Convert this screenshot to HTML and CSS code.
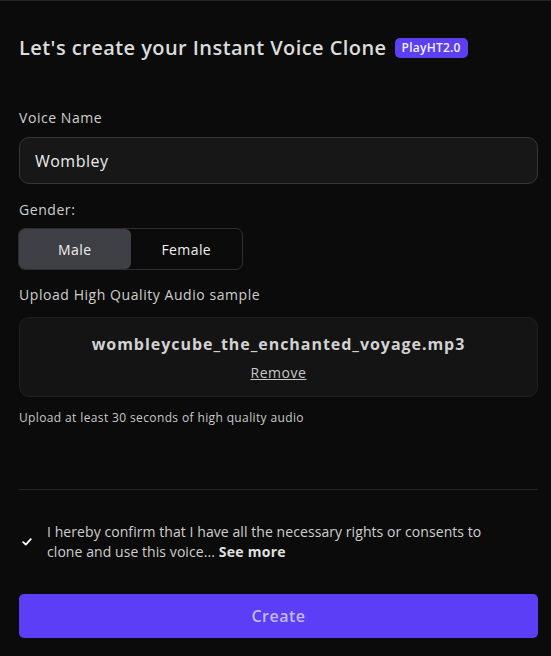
FILE: index.html
```html
<!DOCTYPE html>
<html lang="en">
<head>
    <meta charset="UTF-8">
    <meta name="viewport" content="width=device-width, initial-scale=1.0">
    <title>Instant Voice Clone</title>
    <link rel="stylesheet" href="styles.css">
</head>
<body>
    <div class="panel">
        <h1 class="title">Let's create your Instant Voice Clone <span class="badge">PlayHT2.0</span></h1>

        <form class="clone-form">
            <div class="field">
                <label class="label" for="voiceName">Voice Name</label>
                <input class="text-input" id="voiceName" type="text" value="Wombley">
            </div>

            <div class="field field-gender">
                <div class="label">Gender:</div>
                <div class="segmented">
                    <button type="button" class="seg-btn active">Male</button>
                    <button type="button" class="seg-btn">Female</button>
                </div>
            </div>

            <div class="field field-upload">
                <div class="label">Upload High Quality Audio sample</div>
                <div class="upload-box">
                    <div class="file-name">wombleycube_the_enchanted_voyage.mp3</div>
                    <a class="remove-link" href="#">Remove</a>
                </div>
                <div class="hint">Upload at least 30 seconds of high quality audio</div>
            </div>

            <hr class="divider">

            <!-- Consent -->
            <label class="consent">
                <span class="check">
                    <svg width="10" height="8" viewBox="0 0 10 8"><path d="M1.2 4.2 L3.8 6.6 L8.8 1.2" fill="none" stroke="#fff" stroke-width="1.8" stroke-linecap="round" stroke-linejoin="round"/></svg>
                </span>
                <span class="consent-text">I hereby confirm that I have all the necessary rights or consents to clone and use this voice... <b>See more</b></span>
            </label>

            <button type="button" class="create-btn">Create</button>
        </form>
    </div>
</body>
</html>
```

FILE: styles.css
```css
body {
    margin: 0;
    background-color: #0b0b0b;
    color: #d6d6d6;
    font-family: "Open Sans", "DejaVu Sans", sans-serif;
    letter-spacing: 0.035em;
}
.panel {
    border-top: 1px solid #262626;
    padding: 0 13px 0 19px;
    height: 655px;
    box-sizing: border-box;
}
.title {
    margin: 0;
    padding-top: 33px;
    font-size: 20px;
    font-weight: 600;
    color: #dcdcdc;
    line-height: 28px;
    letter-spacing: 0.022em;
    display: flex;
    align-items: center;
    gap: 8px;
}
.badge {
    background: #5b3ff0;
    color: #f2f0ff;
    font-size: 12px;
    font-weight: 600;
    line-height: 20px;
    letter-spacing: 0.02em;
    padding: 0 7px;
    border-radius: 5px;
}
.clone-form {
    display: flex;
    flex-direction: column;
    margin-top: 46px;
}
.field {
    display: flex;
    flex-direction: column;
}
.label {
    font-size: 14px;
    color: #cfcfcf;
    line-height: 20px;
    margin-bottom: 9px;
}
.text-input {
    height: 47px;
    box-sizing: border-box;
    background: #171717;
    border: 1px solid #363636;
    border-radius: 10px;
    color: #ececec;
    font-family: inherit;
    font-size: 16px;
    letter-spacing: 0.03em;
    padding: 0 15px;
    outline: none;
}
.field-gender {
    margin-top: 16px;
}
.segmented {
    display: flex;
    width: 225px;
    height: 42px;
    box-sizing: border-box;
    border: 1px solid #2e2e32;
    border-radius: 7px;
    margin-left: -1px;
    margin-top: -1px;
}
.seg-btn {
    flex: 1;
    background: transparent;
    border: none;
    border-radius: 6px;
    color: #f0f0f0;
    font-family: inherit;
    font-size: 14px;
    font-weight: 500;
    letter-spacing: 0.03em;
}
.seg-btn.active {
    background: #3f3f46;
}
.field-upload {
    margin-top: 15px;
}
.upload-box {
    height: 80px;
    margin-top: 3px;
    box-sizing: border-box;
    background: #141414;
    border: 1px solid #1f1f1f;
    border-radius: 10px;
    display: flex;
    flex-direction: column;
    align-items: center;
    justify-content: center;
    gap: 8px;
}
.file-name {
    font-size: 16px;
    font-weight: 700;
    color: #d2d2d2;
    letter-spacing: 0.06em;
}
.remove-link {
    font-size: 14px;
    color: #c8c8c8;
    text-decoration: underline;
}
.hint {
    font-size: 12px;
    color: #c8c8c8;
    margin-top: 12px;
    letter-spacing: 0.031em;
}
.divider {
    border: none;
    border-top: 1px solid #262626;
    margin: 63px 0 0;
}
.consent {
    display: flex;
    align-items: center;
    gap: 15px;
    margin-top: 32px;
    padding-right: 30px;
    font-size: 14px;
    line-height: 20px;
    letter-spacing: 0.005em;
    color: #cfcfcf;
}
.check {
    display: flex;
    padding-left: 3px;
}
.consent-text b {
    color: #e0e0e0;
    letter-spacing: 0.02em;
}
.create-btn {
    margin-top: 32px;
    height: 44px;
    background: #5b3ef5;
    border: none;
    border-radius: 5px;
    color: #c2b9f2;
    font-family: inherit;
    font-size: 16px;
    font-weight: 600;
    letter-spacing: 0.03em;
}
```
